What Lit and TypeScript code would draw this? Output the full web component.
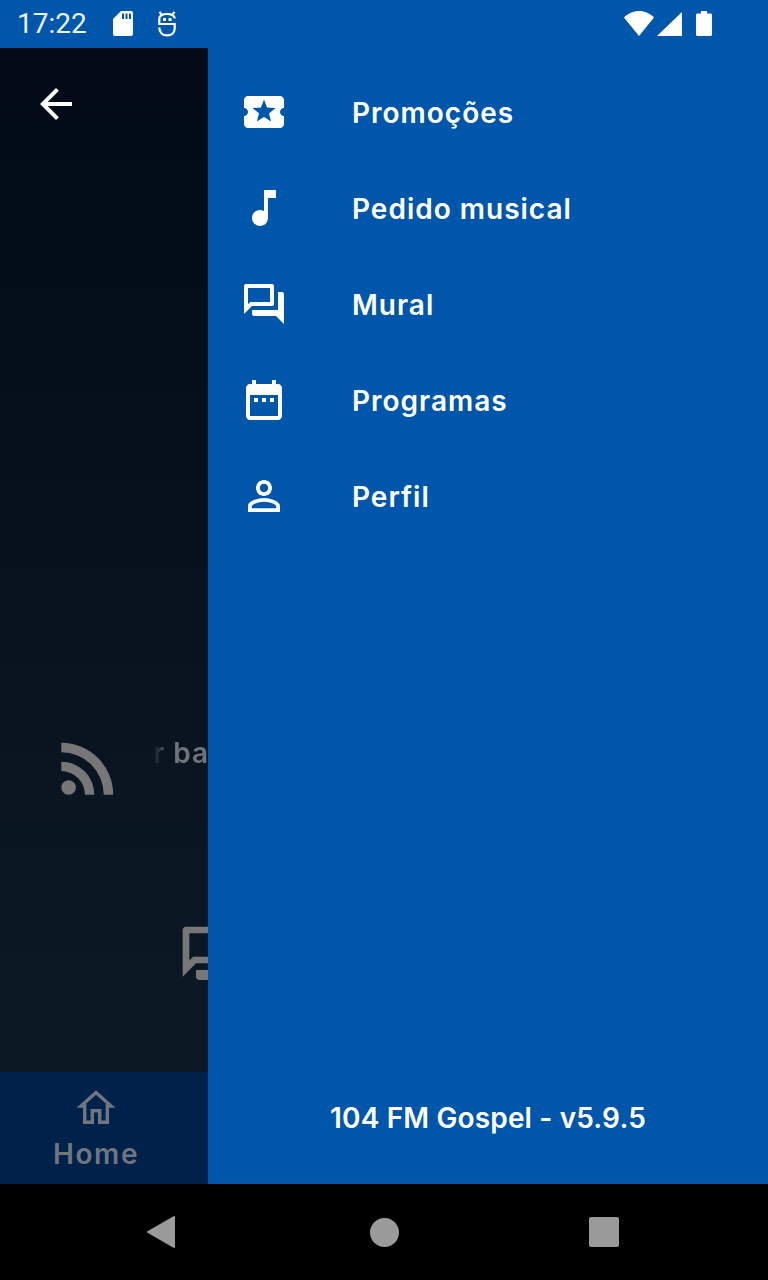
import { LitElement, html, css } from "lit";
import { customElement } from "lit/decorators.js";

const FORUM = "M15 4v7H5.17L4 12.17V4h11m1-2H3c-.55 0-1 .45-1 1v14l4-4h10c.55 0 1-.45 1-1V3c0-.55-.45-1-1-1zm5 4h-2v9H6v2c0 .55.45 1 1 1h11l4 4V7c0-.55-.45-1-1-1z";
const ITEMS: [string, string][] = [
  ["Promoções", "M20 12c0-1.1.9-2 2-2V6c0-1.1-.9-2-2-2H4c-1.1 0-1.99.9-1.99 2v4c1.1 0 1.99.9 1.99 2s-.89 2-2 2v4c0 1.1.9 2 2 2h16c1.1 0 2-.9 2-2v-4c-1.1 0-2-.9-2-2zm-4.42 4.8L12 14.5l-3.58 2.3 1.08-4.12-3.29-2.69 4.24-.25L12 5.8l1.54 3.95 4.24.25-3.29 2.69 1.09 4.11z"],
  ["Pedido musical", "M12 3v10.55c-.59-.34-1.27-.55-2-.55-2.21 0-4 1.79-4 4s1.79 4 4 4 4-1.79 4-4V7h4V3h-6z"],
  ["Mural", FORUM],
  ["Programas", "M19 4h-1V2h-2v2H8V2H6v2H5c-1.1 0-2 .9-2 2v14c0 1.1.9 2 2 2h14c1.1 0 2-.9 2-2V6c0-1.1-.9-2-2-2zm0 16H5V9.5h14V20zM7 11h2v2H7zm4 0h2v2h-2zm4 0h2v2h-2z"],
  ["Perfil", "M12 5.9c1.16 0 2.1.94 2.1 2.1s-.94 2.1-2.1 2.1S9.9 9.16 9.9 8s.94-2.1 2.1-2.1m0 9c2.97 0 6.1 1.46 6.1 2.1v1.1H5.9V17c0-.64 3.13-2.1 6.1-2.1M12 4C9.79 4 8 5.79 8 8s1.79 4 4 4 4-1.79 4-4-1.79-4-4-4zm0 9c-2.67 0-8 1.34-8 4v3h16v-3c0-2.66-5.33-4-8-4z"],
];

const icon = (d: string, cls: string) => html`<svg class=${cls} viewBox="0 0 24 24"><path d=${d}></path></svg>`;

@customElement("app-root")
export class AppRoot extends LitElement {
  static styles = css`
    :host { display: flex; flex-direction: column; width: 768px; height: 1280px; overflow: hidden; background: #000; font-family: Inter, "Liberation Sans", sans-serif; }
    svg { display: block; flex: none; fill: currentColor; }
    .status { height: 48px; flex: none; background: #0056aa; color: #fff; display: flex; align-items: center; padding: 0 56px 0 17px; box-sizing: border-box; }
    .time { font: 400 28px/48px Roboto, sans-serif; color: #eaf2fa; width: 96px; }
    .sd { width: 20px; height: 25px; margin-top: -1px; }
    .bug { width: 20px; height: 26px; margin-left: 24px; }
    .right { margin-left: auto; display: flex; align-items: center; }
    .wifi { width: 30px; height: 25px; margin-top: -1px; }
    .signal { width: 25px; height: 24px; margin-left: 3px; }
    .battery { width: 16px; height: 25px; margin-left: 14px; margin-top: -1px; }

    .main { flex: 1; min-height: 0; display: flex; }
    .behind { width: 208px; flex: none; overflow: hidden; display: flex; flex-direction: column; background: linear-gradient(#010a15, #0e1b26); }
    .back { width: 48px; height: 48px; margin: 32px 0 0 32px; color: #fff; flex: none; }
    .rss-row { display: flex; align-items: center; margin: 600px 0 0 48px; height: 80px; white-space: nowrap; }
    .rss { width: 80px; height: 80px; color: #777; }
    .faded { margin-left: 25px; margin-top: -30px; font-size: 28px; letter-spacing: 1px; font-weight: 600; color: #6f747b; -webkit-mask-image: linear-gradient(90deg, transparent, #000 16px); mask-image: linear-gradient(90deg, transparent, #000 16px); }
    .chat { width: 80px; height: 80px; margin: 112px 0 0 176px; color: #777; }
    .tabs { margin-top: auto; height: 112px; flex: none; width: 192px; background: #00214a; box-shadow: 16px 0 0 #00214a; display: flex; flex-direction: column; align-items: center; color: #6f7680; }
    .home { width: 40px; height: 40px; margin-top: 16px; }
    .home-label { font-size: 28px; letter-spacing: 1.6px; font-weight: 600; line-height: 36px; margin-top: 8px; }

    .drawer { flex: 1; min-width: 0; background: #0056aa; color: #fff; display: flex; flex-direction: column; padding-top: 16px; }
    .item { height: 96px; display: flex; align-items: center; padding-left: 32px; }
    .item svg { width: 48px; height: 48px; margin-right: 64px; }
    .item span { font-size: 28px; letter-spacing: 1px; font-weight: 600; line-height: 36px; margin-top: 2px; }
    .version { margin-top: auto; text-align: center; font-size: 28px; letter-spacing: 0.15px; font-weight: 600; line-height: 36px; padding-bottom: 48px; }

    .nav { height: 96px; flex: none; background: #000; display: flex; align-items: center; padding-left: 147px; color: #9a9a9a; }
    .nav-back { width: 28px; height: 32px; }
    .nav-home { width: 29px; height: 29px; margin-left: 194.5px; }
    .nav-recent { width: 30px; height: 30px; margin-left: 190.5px; }
  `;

  render() {
    return html`
      <div class="status">
        <div class="time">17:22</div>
        <svg class="sd" viewBox="0 0 20 25"><path fill-rule="evenodd" d="M8 0H18C19.1 0 20 .9 20 2V23C20 24.1 19.1 25 18 25H2C.9 25 0 24.1 0 23V8ZM9 2.5V8H11V2.5ZM12.5 2.5V8H14.5V2.5ZM16 2.5V8H18V2.5Z"></path></svg>
        <svg class="bug" viewBox="0 0 20 26"><g fill="none" stroke="currentColor" stroke-width="2.2"><path d="M2.5 .8 4.6 3.6M17.5 .8 15.4 3.6"></path><path d="M17.7 7.5C17.7 4.8 14.5 3 10 3S2.3 4.8 2.3 7.5V13H17.7V17.5C17.7 21.8 14.4 24.4 10 24.4S2.3 21.8 2.3 16.5"></path></g><rect x="6" y="7" width="3" height="3"></rect><rect x="11.5" y="7" width="3" height="3"></rect></svg>
        <div class="right">
          <svg class="wifi" viewBox="0 0 30 25"><path d="M0 6.5C4 2.5 9.2 0 15 0S26 2.5 30 6.5L15 25Z"></path></svg>
          <svg class="signal" viewBox="0 0 25 24"><path d="M0 24 25 0V24Z"></path></svg>
          <svg class="battery" viewBox="0 0 16 25"><path d="M5 0H11V2.5H14.5C15.3 2.5 16 3.2 16 4V23.5C16 24.3 15.3 25 14.5 25H1.5C.7 25 0 24.3 0 23.5V4C0 3.2.7 2.5 1.5 2.5H5Z"></path></svg>
        </div>
      </div>
      <div class="main">
        <div class="behind">
          ${icon("M20 11H7.83l5.59-5.59L12 4l-8 8 8 8 1.41-1.41L7.83 13H20v-2z", "back")}
          <div class="rss-row">
            ${icon("M6.18 15.64a2.18 2.18 0 0 1 2.18 2.18C8.36 19 7.38 20 6.18 20 5 20 4 19 4 17.82a2.18 2.18 0 0 1 2.18-2.18M4 4.44A15.56 15.56 0 0 1 19.56 20h-2.83A12.73 12.73 0 0 0 4 7.27V4.44m0 5.66a9.9 9.9 0 0 1 9.9 9.9h-2.83A7.07 7.07 0 0 0 4 12.93V10.1z", "rss")}
            <span class="faded">r ba</span>
          </div>
          ${icon(FORUM, "chat")}
          <div class="tabs">
            <svg class="home" viewBox="0 0 40 40"><path fill="none" stroke="currentColor" stroke-width="3.4" stroke-miterlimit="4" d="M20 4.5 35 18H31.3V34.3H23.7V22.7H16.3V34.3H8.7V18H5Z"></path></svg>
            <div class="home-label">Home</div>
          </div>
        </div>
        <div class="drawer">
          ${ITEMS.map(([label, d]) => html`<div class="item">${icon(d, "")}<span>${label}</span></div>`)}
          <div class="version">104 FM Gospel - v5.9.5</div>
        </div>
      </div>
      <div class="nav">
        <svg class="nav-back" viewBox="0 0 28 32"><path stroke="currentColor" stroke-width="2" stroke-linejoin="round" d="M1 16 27 1V31Z"></path></svg>
        <svg class="nav-home" viewBox="0 0 29 29"><circle cx="14.5" cy="14.5" r="14.5"></circle></svg>
        <svg class="nav-recent" viewBox="0 0 30 30"><rect width="30" height="30" rx="2"></rect></svg>
      </div>
    `;
  }
}
